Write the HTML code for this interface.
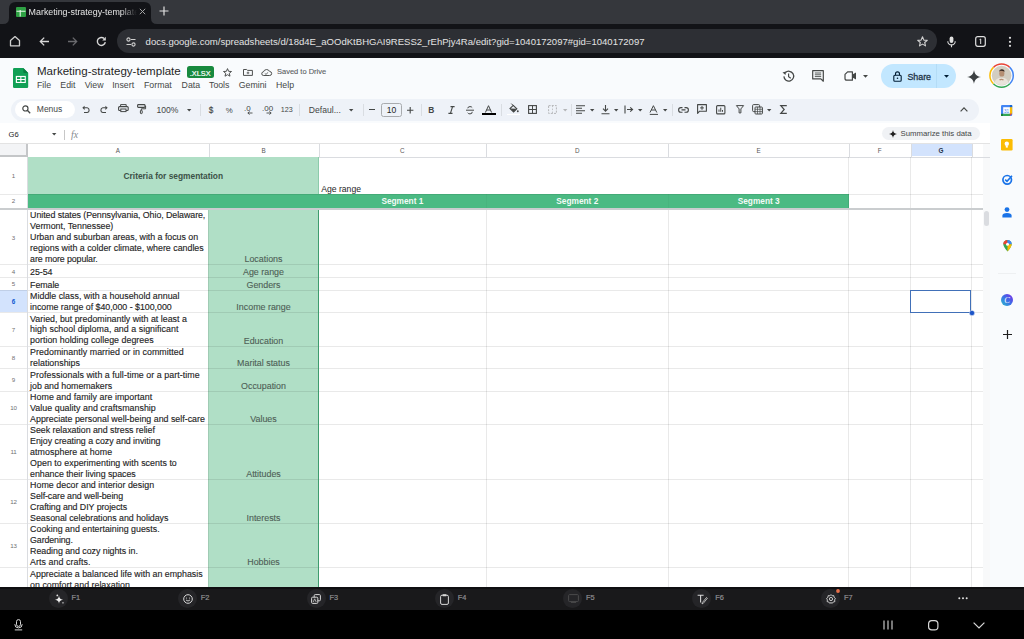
<!DOCTYPE html>
<html><head><meta charset="utf-8"><style>
*{margin:0;padding:0;box-sizing:border-box}
html,body{width:1024px;height:639px;overflow:hidden;background:#f9fbfd;font-family:"Liberation Sans",sans-serif;position:relative}
.a{position:absolute}
svg{position:absolute;overflow:visible}
.t{position:absolute;white-space:pre;line-height:1}
</style></head><body>
<div class="a" style="left:0px;top:0px;width:1024px;height:24px;background:#35373c;"></div>
<div class="a" style="left:0px;top:24px;width:1024px;height:34px;background:#121317;"></div>
<svg style="left:0px;top:0px;" width="170" height="26" viewBox="0 0 170 26"><path d="M3 24 Q9 24 9 18 L9 9 Q9 2 16 2 L144 2 Q151 2 151 9 L151 18 Q151 24 157 24 Z" fill="#121317"/></svg>
<svg style="left:15.5px;top:6.7px;" width="10" height="10" viewBox="0 0 10 10"><rect x="0" y="0" width="10" height="10" rx="1" fill="#2ea043"/><path d="M0.5 4.2H9.5M4.2 3V9.5" stroke="#e8f5e9" stroke-width="1.1"/></svg>
<div class="t" style="left:28.6px;top:7.77px;font-size:8.9px;color:#e6e6e6;width:108px;overflow:hidden;-webkit-mask-image:linear-gradient(90deg,#000 85%,transparent 100%)">Marketing-strategy-template</div>
<svg style="left:138.5px;top:8.3px;" width="7" height="7" viewBox="0 0 7 7"><path d="M0.8 0.8L6.2 6.2M6.2 0.8L0.8 6.2" stroke="#aaaaaa" stroke-width="0.95"/></svg>
<svg style="left:159px;top:6px;" width="10" height="10" viewBox="0 0 10 10"><path d="M5 0.5V9.5M0.5 5H9.5" stroke="#e0e0e0" stroke-width="1.2"/></svg>
<svg style="left:9px;top:35px;" width="12" height="12" viewBox="0 0 12 12"><path d="M1.5 5.5L6 1.6L10.5 5.5V10.8H1.5Z" fill="none" stroke="#d0d0d0" stroke-width="1.3" stroke-linejoin="round"/></svg>
<svg style="left:38.5px;top:36px;" width="11" height="11" viewBox="0 0 11 11"><path d="M10 5.5H1.5M5.2 1.6L1.3 5.5L5.2 9.4" fill="none" stroke="#d8d8d8" stroke-width="1.3"/></svg>
<svg style="left:66.5px;top:36px;" width="11" height="11" viewBox="0 0 11 11"><path d="M1 5.5H9.5M5.8 1.6L9.7 5.5L5.8 9.4" fill="none" stroke="#6a6a6e" stroke-width="1.3"/></svg>
<svg style="left:95.5px;top:35.5px;" width="11" height="11" viewBox="0 0 11 11"><path d="M9.3 6.2A4 4 0 1 1 8.2 2.6" fill="none" stroke="#d8d8d8" stroke-width="1.4"/><path d="M9.8 0.8V4.4H6.2Z" fill="#d8d8d8"/></svg>
<div class="a" style="left:117px;top:29px;width:820px;height:24px;background:#2d2f34;border-radius:12px;"></div>
<svg style="left:126px;top:36.5px;" width="10" height="10" viewBox="0 0 10 10"><circle cx="2.5" cy="2.5" r="1.6" fill="none" stroke="#cfcfcf" stroke-width="1.1"/><path d="M5 2.5H9.5M0.5 7.5H5" stroke="#cfcfcf" stroke-width="1.1"/><circle cx="7.5" cy="7.5" r="1.6" fill="none" stroke="#cfcfcf" stroke-width="1.1"/></svg>
<div class="t" style="left:145.60px;top:36.72px;font-size:9.55px;color:#e3e3e3;">docs.google.com/spreadsheets/d/18d4E_aOOdKtBHGAI9RESS2_rEhPjy4Ra/edit?gid=1040172097#gid=1040172097</div>
<svg style="left:916.5px;top:36.3px;" width="11" height="11" viewBox="0 0 11 11"><path d="M5.5 0.8L6.9 4.1L10.3 4.3L7.7 6.5L8.5 9.9L5.5 8.1L2.5 9.9L3.3 6.5L0.7 4.3L4.1 4.1Z" fill="none" stroke="#d0d0d0" stroke-width="1.1" stroke-linejoin="round"/></svg>
<svg style="left:947px;top:35.5px;" width="9" height="12" viewBox="0 0 9 12"><rect x="2.6" y="0.5" width="3.8" height="6.5" rx="1.9" fill="#e0e0e0"/><path d="M0.8 5.2A3.7 3.7 0 0 0 8.2 5.2M4.5 9V11.3" fill="none" stroke="#e0e0e0" stroke-width="1.1"/></svg>
<svg style="left:975px;top:36px;" width="11" height="11" viewBox="0 0 11 11"><rect x="0.7" y="0.7" width="9.6" height="9.6" rx="2" fill="none" stroke="#e0e0e0" stroke-width="1.2"/><path d="M4.6 3.6L5.7 3V8" fill="none" stroke="#e0e0e0" stroke-width="1"/></svg>
<svg style="left:1007.5px;top:36px;" width="4" height="12" viewBox="0 0 4 12"><circle cx="2" cy="1.8" r="1.1" fill="#e0e0e0"/><circle cx="2" cy="5.8" r="1.1" fill="#e0e0e0"/><circle cx="2" cy="9.8" r="1.1" fill="#e0e0e0"/></svg>
<div class="a" style="left:0px;top:58px;width:1024px;height:529px;background:#f9fbfd;"></div>
<svg style="left:13.2px;top:67.9px;" width="16" height="20" viewBox="0 0 16 20"><path d="M1.2 0H10.3L15.2 5V18.8Q15.2 20 14 20H1.2Q0 20 0 18.8V1.2Q0 0 1.2 0Z" fill="#11a055"/><path d="M10.3 0V4Q10.3 5 11.3 5H15.2Z" fill="#0b7d40"/><rect x="2.8" y="7.9" width="10" height="7.1" fill="#fff"/><rect x="4" y="9.1" width="3.3" height="1.9" fill="#11a055"/><rect x="8.4" y="9.1" width="3.3" height="1.9" fill="#11a055"/><rect x="4" y="12" width="3.3" height="1.9" fill="#11a055"/><rect x="8.4" y="12" width="3.3" height="1.9" fill="#11a055"/></svg>
<div class="t" style="left:37.00px;top:66.32px;font-size:11.55px;color:#1f1f1f;">Marketing-strategy-template</div>
<div class="a" style="left:187px;top:66.2px;width:26.5px;height:11.8px;background:#188a3e;border-radius:2.5px;"></div>
<div class="t" style="left:200.20px;transform:translateX(-50%);top:69.62px;font-size:7.3px;color:#ffffff;-webkit-text-stroke:0.2px #fff;">.XLSX</div>
<svg style="left:223.2px;top:67.8px;" width="9" height="9" viewBox="0 0 9 9"><path d="M4.5 0.6L5.6 3.3L8.5 3.5L6.3 5.3L7 8.2L4.5 6.7L2 8.2L2.7 5.3L0.5 3.5L3.4 3.3Z" fill="none" stroke="#444746" stroke-width="0.95" stroke-linejoin="round"/></svg>
<svg style="left:242.5px;top:69.2px;" width="10" height="7" viewBox="0 0 10 7"><path d="M0.5 0.5H3.6L4.6 1.4H9.4V6.4H0.5Z" fill="none" stroke="#444746" stroke-width="0.95"/><path d="M5 2.6V5.2M3.7 3.9H6.3" stroke="#444746" stroke-width="0.8"/></svg>
<svg style="left:261.2px;top:69px;" width="11" height="7" viewBox="0 0 11 7"><path d="M2.7 6.5H8.6A2 2 0 0 0 8.7 2.5A3.4 3.4 0 0 0 2.4 2.9A1.8 1.8 0 0 0 2.7 6.5Z" fill="none" stroke="#444746" stroke-width="0.95"/><path d="M3.8 4.5L5 5.4L7.2 3.3" fill="none" stroke="#444746" stroke-width="0.8"/></svg>
<div class="t" style="left:277.00px;top:68.35px;font-size:7.5px;color:#5a5e62;-webkit-text-stroke:0.1px #5a5e62;">Saved to Drive</div>
<div class="t" style="left:37.00px;top:81.29px;font-size:8.75px;color:#444746;">File</div>
<div class="t" style="left:60.30px;top:81.29px;font-size:8.75px;color:#444746;">Edit</div>
<div class="t" style="left:84.70px;top:81.29px;font-size:8.75px;color:#444746;">View</div>
<div class="t" style="left:112.20px;top:81.29px;font-size:8.75px;color:#444746;">Insert</div>
<div class="t" style="left:144.00px;top:81.29px;font-size:8.75px;color:#444746;">Format</div>
<div class="t" style="left:181.60px;top:81.29px;font-size:8.75px;color:#444746;">Data</div>
<div class="t" style="left:209.00px;top:81.29px;font-size:8.75px;color:#444746;">Tools</div>
<div class="t" style="left:238.75px;top:81.29px;font-size:8.75px;color:#444746;">Gemini</div>
<div class="t" style="left:276.00px;top:81.29px;font-size:8.75px;color:#444746;">Help</div>
<svg style="left:782px;top:70.3px;" width="12.5" height="12.5" viewBox="0 0 12.5 12.5"><path d="M1.9 6.4A4.9 4.9 0 1 0 3.3 2.7" fill="none" stroke="#444746" stroke-width="1.25"/><path d="M0.5 2.6L3.9 1.4L3.5 5Z" fill="#444746"/><path d="M6.6 3.6V6.7L8.8 8.2" fill="none" stroke="#444746" stroke-width="1.15"/></svg>
<svg style="left:811.8px;top:70.4px;" width="12.5" height="12" viewBox="0 0 12.5 12"><path d="M0.7 0.7H11.3V11.2L8.9 8.9H0.7Z" fill="none" stroke="#444746" stroke-width="1.2" stroke-linejoin="round"/><path d="M2.8 3H9.2M2.8 4.8H9.2M2.8 6.6H9.2" stroke="#444746" stroke-width="0.9"/></svg>
<svg style="left:843.5px;top:71px;" width="14" height="10" viewBox="0 0 14 10"><path d="M3.6 0.8H8.4V9.2H2.7Q1 9.2 1 7.5V3.4Z" fill="none" stroke="#444746" stroke-width="1.2" stroke-linejoin="round"/><path d="M8.4 3.6L12 1.5V8.5L8.4 6.4Z" fill="#444746"/></svg>
<svg style="left:862.7px;top:74.8px;" width="5" height="3" viewBox="0 0 5 3"><path d="M0 0H5L2.5 2.8Z" fill="#444746"/></svg>
<div class="a" style="left:881px;top:64.4px;width:75px;height:24px;background:#c2e7ff;border-radius:12px;"></div>
<div class="a" style="left:936.2px;top:64.4px;width:0.8px;height:24px;background:#b4dcf6;"></div>
<svg style="left:892.5px;top:70.5px;" width="9" height="11" viewBox="0 0 9 11"><rect x="0.8" y="4.2" width="7.4" height="6" rx="1" fill="none" stroke="#001d35" stroke-width="1.1"/><path d="M2.5 4.2V2.9A2 2 0 0 1 6.5 2.9V4.2" fill="none" stroke="#001d35" stroke-width="1.1"/><circle cx="4.5" cy="7.2" r="0.8" fill="#001d35"/></svg>
<div class="t" style="left:907.40px;top:72.91px;font-size:8.85px;color:#1d3347;-webkit-text-stroke:0.3px #1d3347;">Share</div>
<svg style="left:943.6px;top:74.8px;" width="5" height="3" viewBox="0 0 5 3"><path d="M0 0H5L2.5 2.8Z" fill="#001d35"/></svg>
<svg style="left:966.5px;top:70px;" width="14" height="14" viewBox="0 0 14 14"><path d="M7 0C7.4 3.8 9.6 6.4 14 7C9.6 7.6 7.4 10.2 7 14C6.6 10.2 4.4 7.6 0 7C4.4 6.4 6.6 3.8 7 0Z" fill="#3c4043"/></svg>
<svg style="left:990px;top:64.4px;" width="23.2" height="23.2" viewBox="0 0 23.2 23.2"><path d="M3.4 3.4A11.4 11.4 0 0 1 19.8 3.4" fill="none" stroke="#ea4335" stroke-width="1.5"/><path d="M19.8 3.4A11.4 11.4 0 0 1 19.8 19.8" fill="none" stroke="#4285f4" stroke-width="1.5"/><path d="M19.8 19.8A11.4 11.4 0 0 1 3.4 19.8" fill="none" stroke="#34a853" stroke-width="1.5"/><path d="M3.4 19.8A11.4 11.4 0 0 1 3.4 3.4" fill="none" stroke="#fbbc04" stroke-width="1.5"/><circle cx="11.6" cy="11.6" r="9.8" fill="#d2cdc0"/><path d="M4.5 18.5Q6 13.5 11.6 13.8Q17 13.5 18.5 18.5Q11.6 23.5 4.5 18.5Z" fill="#e9e4da"/><ellipse cx="11.8" cy="9.4" rx="2.6" ry="3.2" fill="#b58f73"/><path d="M9 7.8Q9.2 5 11.8 5.2Q14.6 5.1 14.6 7.8Q13 6.6 11.8 7Q10.4 6.5 9 7.8Z" fill="#3a2c24"/><path d="M9.5 16Q11 14.8 13.5 15.8" stroke="#b58f73" stroke-width="1.4" fill="none"/></svg>
<div class="a" style="left:10.7px;top:98.5px;width:968.5px;height:22.2px;background:#eef2f8;border-radius:11px;"></div>
<div class="a" style="left:15.1px;top:101.1px;width:60.1px;height:17px;background:#ffffff;border-radius:8.5px;"></div>
<svg style="left:21.5px;top:105.3px;" width="9" height="9" viewBox="0 0 9 9"><circle cx="3.4" cy="3.4" r="2.6" fill="none" stroke="#444746" stroke-width="1.15"/><path d="M5.3 5.3L8.2 8.2" stroke="#444746" stroke-width="1.3"/></svg>
<div class="t" style="left:36.80px;top:105.10px;font-size:8.5px;color:#444746;">Menus</div>
<svg style="left:82.2px;top:105.2px;" width="7.5" height="7.5" viewBox="0 0 7.5 7.5"><path d="M2.2 2.8H5.2A2.4 2.4 0 0 1 5.2 7.5H2" fill="none" stroke="#444746" stroke-width="1.1"/><path d="M0.3 2.8L2.6 0.7V4.9Z" fill="#444746"/></svg>
<svg style="left:100.3px;top:105.2px;" width="7.5" height="7.5" viewBox="0 0 7.5 7.5"><path d="M5.8 2.8H2.8A2.4 2.4 0 0 0 2.8 7.5H6" fill="none" stroke="#444746" stroke-width="1.1"/><path d="M7.7 2.8L5.4 0.7V4.9Z" fill="#444746"/></svg>
<svg style="left:118px;top:104.4px;" width="11" height="8" viewBox="0 0 11 8"><path d="M2.6 2.6V0.6H8.2V2.6" fill="none" stroke="#444746" stroke-width="1"/><rect x="0.6" y="2.6" width="9.6" height="3.9" rx="1" fill="none" stroke="#444746" stroke-width="1.1"/><rect x="2.8" y="5" width="5.2" height="2.6" fill="#eef2f8" stroke="#444746" stroke-width="1"/></svg>
<svg style="left:137px;top:104.1px;" width="9" height="10" viewBox="0 0 9 10"><rect x="0.6" y="0.6" width="7.4" height="2.8" rx="0.8" fill="none" stroke="#444746" stroke-width="1.1"/><path d="M8 2H8.6V4.8H4.3V6.3" fill="none" stroke="#444746" stroke-width="1"/><rect x="3.4" y="6.3" width="1.8" height="3.3" rx="0.6" fill="none" stroke="#444746" stroke-width="1"/></svg>
<div class="t" style="left:156.50px;top:105.52px;font-size:8.6px;color:#444746;">100%</div>
<svg style="left:187.3px;top:108.8px;" width="4.4" height="2.6" viewBox="0 0 4.4 2.6"><path d="M0 0H4.4L2.2 2.4Z" fill="#444746"/></svg>
<div class="a" style="left:199.6px;top:103.5px;width:0.8px;height:12px;background:#d9dde2;"></div>
<div class="a" style="left:299.4px;top:103.5px;width:0.8px;height:12px;background:#d9dde2;"></div>
<div class="a" style="left:363.4px;top:103.5px;width:0.8px;height:12px;background:#d9dde2;"></div>
<div class="a" style="left:420.8px;top:103.5px;width:0.8px;height:12px;background:#d9dde2;"></div>
<div class="a" style="left:500.7px;top:103.5px;width:0.8px;height:12px;background:#d9dde2;"></div>
<div class="a" style="left:570.5px;top:103.5px;width:0.8px;height:12px;background:#d9dde2;"></div>
<div class="a" style="left:672px;top:103.5px;width:0.8px;height:12px;background:#d9dde2;"></div>
<div class="t" style="left:211.00px;transform:translateX(-50%);top:106.86px;font-size:8.2px;color:#444746;-webkit-text-stroke:0.15px #444746;">$</div>
<div class="t" style="left:229.30px;transform:translateX(-50%);top:107.20px;font-size:7.8px;color:#444746;">%</div>
<div class="t" style="left:244.00px;top:104.53px;font-size:8px;color:#444746;">.0</div>
<svg style="left:246.5px;top:111.3px;" width="6" height="4" viewBox="0 0 6 4"><path d="M5.5 2H1.2M2.6 0.5L0.8 2L2.6 3.5" fill="none" stroke="#444746" stroke-width="0.9"/></svg>
<div class="t" style="left:262.00px;top:104.53px;font-size:8px;color:#444746;">.00</div>
<svg style="left:265.5px;top:111.3px;" width="6" height="4" viewBox="0 0 6 4"><path d="M0.5 2H4.8M3.4 0.5L5.2 2L3.4 3.5" fill="none" stroke="#444746" stroke-width="0.9"/></svg>
<div class="t" style="left:286.70px;transform:translateX(-50%);top:105.71px;font-size:7.2px;color:#444746;">123</div>
<div class="t" style="left:308.80px;top:105.52px;font-size:8.6px;color:#444746;">Defaul...</div>
<svg style="left:348.5px;top:108.8px;" width="4.4" height="2.6" viewBox="0 0 4.4 2.6"><path d="M0 0H4.4L2.2 2.4Z" fill="#444746"/></svg>
<div class="a" style="left:368.5px;top:109.4px;width:6px;height:1.1px;background:#444746;"></div>
<div class="a" style="left:381.4px;top:102.7px;width:20.3px;height:13.9px;background:#eef2f8;border:0.9px solid #a8abae;border-radius:2.5px;"></div>
<div class="t" style="left:391.50px;transform:translateX(-50%);top:105.62px;font-size:8.6px;color:#1f1f1f;">10</div>
<svg style="left:406.8px;top:106.5px;" width="6.4" height="6.4" viewBox="0 0 6.4 6.4"><path d="M3.2 0V6.4M0 3.2H6.4" stroke="#444746" stroke-width="1.1"/></svg>
<div class="t" style="left:431.40px;transform:translateX(-50%);top:105.99px;font-size:8.4px;color:#444746;font-weight:700;">B</div>
<svg style="left:447.5px;top:105.8px;" width="7" height="8" viewBox="0 0 7 8"><path d="M2.5 0.6H6.6M0.4 7.4H4.5M4.6 0.6L2.4 7.4" fill="none" stroke="#444746" stroke-width="1.1"/></svg>
<svg style="left:465.5px;top:105.5px;" width="8" height="8.5" viewBox="0 0 8 8.5"><path d="M6.2 1.6Q5.6 0.6 4 0.6Q1.8 0.6 1.8 2.3M0 4.2H8M6.2 5.8Q6.4 7.9 4 7.9Q2.4 7.9 1.7 6.8" fill="none" stroke="#444746" stroke-width="1"/></svg>
<svg style="left:484.4px;top:104.5px;" width="9" height="8" viewBox="0 0 9 8"><path d="M1.4 7.5L4.5 0.7L7.6 7.5M2.5 5H6.5" fill="none" stroke="#444746" stroke-width="1"/></svg>
<div class="a" style="left:481.7px;top:113.2px;width:14.3px;height:2px;background:#000000;"></div>
<svg style="left:508.8px;top:102.8px;" width="10" height="10" viewBox="0 0 10 10"><path d="M2.3 0.6L4.6 2.9" stroke="#444746" stroke-width="1"/><path d="M4.2 2.4L7.8 5.8L4.6 9L1 5.6Z" fill="none" stroke="#444746" stroke-width="1.1"/><path d="M1 5.6L7.8 5.8L4.6 9Z" fill="#444746"/><circle cx="8.8" cy="8.2" r="0.95" fill="#444746"/></svg>
<div class="a" style="left:507px;top:113.5px;width:13px;height:1.8px;background:#ffffff;"></div>
<svg style="left:527.8px;top:105.1px;" width="9" height="9" viewBox="0 0 9 9"><rect x="0.6" y="0.6" width="7.8" height="7.8" fill="none" stroke="#444746" stroke-width="1.1"/><path d="M4.5 0.6V8.4M0.6 4.5H8.4" stroke="#444746" stroke-width="1"/></svg>
<svg style="left:548.3px;top:105.1px;" width="9" height="9" viewBox="0 0 9 9"><rect x="0.6" y="0.6" width="7.8" height="7.8" fill="none" stroke="#b4b6b8" stroke-width="1" stroke-dasharray="2 1.2"/><path d="M4.5 0.6V8.4" stroke="#b4b6b8" stroke-width="0.8" stroke-dasharray="1.5 1.5"/></svg>
<svg style="left:562.8px;top:108.8px;" width="4.4" height="2.6" viewBox="0 0 4.4 2.6"><path d="M0 0H4.4L2.2 2.4Z" fill="#b4b6b8"/></svg>
<svg style="left:576px;top:105px;" width="9" height="9" viewBox="0 0 9 9"><path d="M0 0.8H9M0 3.3H6M0 5.8H9M0 8.3H6" stroke="#444746" stroke-width="1.05"/></svg>
<svg style="left:589.8px;top:108.8px;" width="4.4" height="2.6" viewBox="0 0 4.4 2.6"><path d="M0 0H4.4L2.2 2.4Z" fill="#444746"/></svg>
<svg style="left:601px;top:104.5px;" width="9" height="10" viewBox="0 0 9 10"><path d="M4.5 0V5.8M2 3.6L4.5 6.2L7 3.6M0.5 8.8H8.5" fill="none" stroke="#444746" stroke-width="1.1"/></svg>
<svg style="left:613.5px;top:108.8px;" width="4.4" height="2.6" viewBox="0 0 4.4 2.6"><path d="M0 0H4.4L2.2 2.4Z" fill="#444746"/></svg>
<svg style="left:623.5px;top:104.8px;" width="10" height="9" viewBox="0 0 10 9"><path d="M1 0.5V8.5M3 4.5H8.5M6.2 2.3L8.6 4.5L6.2 6.7" fill="none" stroke="#444746" stroke-width="1.1"/></svg>
<svg style="left:638.4px;top:108.8px;" width="4.4" height="2.6" viewBox="0 0 4.4 2.6"><path d="M0 0H4.4L2.2 2.4Z" fill="#444746"/></svg>
<svg style="left:649px;top:104.5px;" width="10" height="10" viewBox="0 0 10 10"><path d="M1 7.5L4.4 0.7L7.8 7.5M2.2 5H6.6M0.8 9.4H9" fill="none" stroke="#444746" stroke-width="1"/></svg>
<svg style="left:662.5px;top:108.8px;" width="4.4" height="2.6" viewBox="0 0 4.4 2.6"><path d="M0 0H4.4L2.2 2.4Z" fill="#444746"/></svg>
<svg style="left:677.8px;top:106.6px;" width="11" height="6" viewBox="0 0 11 6"><path d="M4.5 0.6H2.9A2.3 2.3 0 0 0 2.9 5.2H4.5M6.5 0.6H8.1A2.3 2.3 0 0 1 8.1 5.2H6.5M3.5 2.9H7.5" fill="none" stroke="#444746" stroke-width="1.1"/></svg>
<svg style="left:697px;top:104px;" width="10" height="10" viewBox="0 0 10 10"><path d="M0.6 0.6H9.4V7.2H2.6L0.6 9.3Z" fill="none" stroke="#444746" stroke-width="1.1" stroke-linejoin="round"/><path d="M5 2V5.8M3.1 3.9H6.9" stroke="#444746" stroke-width="1"/></svg>
<svg style="left:716.3px;top:104.7px;" width="9.5" height="9.5" viewBox="0 0 9.5 9.5"><rect x="0.6" y="0.6" width="8.3" height="8.3" rx="1" fill="none" stroke="#444746" stroke-width="1.1"/><path d="M3 6.8V4.5M4.75 6.8V2.7M6.5 6.8V5" stroke="#444746" stroke-width="1"/></svg>
<svg style="left:735.6px;top:105.3px;" width="8" height="8.5" viewBox="0 0 8 8.5"><path d="M0.4 0.6H7.6L4.9 3.9V7.9H3.1V3.9Z" fill="none" stroke="#444746" stroke-width="1"/></svg>
<svg style="left:751.8px;top:104.3px;" width="11" height="10.5" viewBox="0 0 11 10.5"><rect x="0.6" y="0.6" width="7" height="7" rx="1" fill="none" stroke="#444746" stroke-width="1"/><rect x="3" y="3" width="7.4" height="7" rx="0.8" fill="#eef2f8" stroke="#444746" stroke-width="1"/><path d="M3 5.3H10.4M3 7.6H10.4M5.5 3V10M8 3V10" stroke="#444746" stroke-width="0.7"/></svg>
<svg style="left:766.5999999999999px;top:108.8px;" width="4.4" height="2.6" viewBox="0 0 4.4 2.6"><path d="M0 0H4.4L2.2 2.4Z" fill="#444746"/></svg>
<svg style="left:779.5px;top:105px;" width="7.5" height="9" viewBox="0 0 7.5 9"><path d="M6.8 0.6H0.8L4.2 4.5L0.8 8.4H6.8" fill="none" stroke="#444746" stroke-width="1.2" stroke-linejoin="miter"/></svg>
<svg style="left:959.8px;top:107px;" width="8" height="5" viewBox="0 0 8 5"><path d="M0.6 4.3L4 0.9L7.4 4.3" fill="none" stroke="#444746" stroke-width="1.2"/></svg>
<div class="a" style="left:0px;top:122.5px;width:990px;height:21px;background:#ffffff;"></div>
<div class="t" style="left:8.60px;top:131.37px;font-size:7.6px;color:#1f1f1f;">G6</div>
<svg style="left:51.8px;top:133.3px;" width="4.4" height="2.6" viewBox="0 0 4.4 2.6"><path d="M0 0H4.4L2.2 2.4Z" fill="#444746"/></svg>
<div class="a" style="left:64px;top:130px;width:0.8px;height:9.6px;background:#c7c7c7;"></div>
<div class="t" style="left:71px;top:130.18px;font-size:9.8px;color:#858a8f;font-family:'Liberation Serif',serif;font-style:italic">fx</div>
<div class="a" style="left:882.4px;top:126.8px;width:97.2px;height:13.4px;background:#f0f2f5;border-radius:6.7px;"></div>
<svg style="left:888.7px;top:129.5px;" width="8" height="8" viewBox="0 0 8 8"><path d="M4 0C4.2 2.2 5.5 3.7 8 4C5.5 4.3 4.2 5.8 4 8C3.8 5.8 2.5 4.3 0 4C2.5 3.7 3.8 2.2 4 0Z" fill="#1f1f1f"/></svg>
<div class="t" style="left:900.50px;top:130.30px;font-size:7.8px;color:#444746;">Summarize this data</div>
<div class="a" style="left:0px;top:143.3px;width:983px;height:443.7px;background:#ffffff;"></div>
<div class="a" style="left:0px;top:143px;width:990px;height:0.9px;background:#e3e3e3;"></div>
<div class="a" style="left:0px;top:143.8px;width:26px;height:11px;background:#f3f4f6;"></div>
<div class="a" style="left:27.5px;top:156.6px;width:962.5px;height:0.9px;background:#dadce0;"></div>
<div class="a" style="left:910.5px;top:143.8px;width:61px;height:12.7px;background:#d3e3fd;"></div>
<div class="t" style="left:117.90px;transform:translateX(-50%);top:147.77px;font-size:6.3px;color:#575757;">A</div>
<div class="t" style="left:263.55px;transform:translateX(-50%);top:147.77px;font-size:6.3px;color:#575757;">B</div>
<div class="t" style="left:402.40px;transform:translateX(-50%);top:147.77px;font-size:6.3px;color:#575757;">C</div>
<div class="t" style="left:577.30px;transform:translateX(-50%);top:147.77px;font-size:6.3px;color:#575757;">D</div>
<div class="t" style="left:758.70px;transform:translateX(-50%);top:147.77px;font-size:6.3px;color:#575757;">E</div>
<div class="t" style="left:879.75px;transform:translateX(-50%);top:147.77px;font-size:6.3px;color:#575757;">F</div>
<div class="t" style="left:941.00px;transform:translateX(-50%);top:147.68px;font-size:6.4px;color:#22324a;font-weight:700;">G</div>
<div class="a" style="left:208.5px;top:143.8px;width:0.8px;height:12.8px;background:#dadce0;"></div>
<div class="a" style="left:318.6px;top:143.8px;width:0.8px;height:12.8px;background:#dadce0;"></div>
<div class="a" style="left:486.2px;top:143.8px;width:0.8px;height:12.8px;background:#dadce0;"></div>
<div class="a" style="left:668.4px;top:143.8px;width:0.8px;height:12.8px;background:#dadce0;"></div>
<div class="a" style="left:849px;top:143.8px;width:0.8px;height:12.8px;background:#dadce0;"></div>
<div class="a" style="left:910.5px;top:143.8px;width:0.8px;height:12.8px;background:#dadce0;"></div>
<div class="a" style="left:971.5px;top:143.8px;width:0.8px;height:12.8px;background:#dadce0;"></div>
<div class="a" style="left:27.5px;top:157px;width:291.1px;height:37px;background:#b0dfc6;"></div>
<div class="a" style="left:27.5px;top:194px;width:821.5px;height:14px;background:#4bba83;"></div>
<div class="a" style="left:208.1px;top:209.6px;width:110.50000000000003px;height:377.4px;background:#b0dfc6;"></div>
<div class="a" style="left:910.5px;top:289.8px;width:0px;height:0px;background:transparent;"></div>
<div class="a" style="left:0px;top:290.4px;width:27.3px;height:21.80000000000001px;background:#d3e3fd;"></div>
<div class="a" style="left:0px;top:194px;width:983px;height:1px;background:rgba(0,0,0,0.085);"></div>
<div class="a" style="left:0px;top:264px;width:983px;height:1px;background:rgba(0,0,0,0.085);"></div>
<div class="a" style="left:0px;top:277px;width:983px;height:1px;background:rgba(0,0,0,0.085);"></div>
<div class="a" style="left:0px;top:290px;width:983px;height:1px;background:rgba(0,0,0,0.085);"></div>
<div class="a" style="left:0px;top:312px;width:983px;height:1px;background:rgba(0,0,0,0.085);"></div>
<div class="a" style="left:0px;top:346px;width:983px;height:1px;background:rgba(0,0,0,0.085);"></div>
<div class="a" style="left:0px;top:368px;width:983px;height:1px;background:rgba(0,0,0,0.085);"></div>
<div class="a" style="left:0px;top:391px;width:983px;height:1px;background:rgba(0,0,0,0.085);"></div>
<div class="a" style="left:0px;top:424px;width:983px;height:1px;background:rgba(0,0,0,0.085);"></div>
<div class="a" style="left:0px;top:479px;width:983px;height:1px;background:rgba(0,0,0,0.085);"></div>
<div class="a" style="left:0px;top:523px;width:983px;height:1px;background:rgba(0,0,0,0.085);"></div>
<div class="a" style="left:0px;top:567px;width:983px;height:1px;background:rgba(0,0,0,0.085);"></div>
<div class="a" style="left:27.1px;top:157px;width:0.9px;height:430px;background:#dadce0;"></div>
<div class="a" style="left:208px;top:210px;width:1px;height:377px;background:rgba(0,0,0,0.085);"></div>
<div class="a" style="left:486px;top:210px;width:1px;height:377px;background:rgba(0,0,0,0.085);"></div>
<div class="a" style="left:486px;top:194px;width:1px;height:14px;background:rgba(0,0,0,0.03);"></div>
<div class="a" style="left:668px;top:210px;width:1px;height:377px;background:rgba(0,0,0,0.085);"></div>
<div class="a" style="left:668px;top:194px;width:1px;height:14px;background:rgba(0,0,0,0.03);"></div>
<div class="a" style="left:848px;top:157px;width:1px;height:430px;background:rgba(0,0,0,0.085);"></div>
<div class="a" style="left:910px;top:157px;width:1px;height:430px;background:rgba(0,0,0,0.085);"></div>
<div class="a" style="left:971px;top:157px;width:1px;height:430px;background:rgba(0,0,0,0.085);"></div>
<div class="a" style="left:318.1px;top:157.1px;width:1.1px;height:37.099999999999994px;background:#8ccbab;"></div>
<div class="a" style="left:318.1px;top:209.6px;width:1.1px;height:377.4px;background:#3e9c6e;"></div>
<div class="a" style="left:0px;top:208px;width:983px;height:2px;background:#cacdcf;"></div>
<div class="a" style="left:26px;top:143.8px;width:2px;height:13.4px;background:#c4c6c8;"></div>
<div class="a" style="left:0px;top:154.8px;width:27.5px;height:2.4px;background:#c4c6c8;"></div>
<div class="t" style="left:13.60px;transform:translateX(-50%);top:173.20px;font-size:6.2px;color:#6f6f6f;">1</div>
<div class="t" style="left:13.60px;transform:translateX(-50%);top:198.40px;font-size:6.2px;color:#6f6f6f;">2</div>
<div class="t" style="left:13.60px;transform:translateX(-50%);top:234.65px;font-size:6.2px;color:#6f6f6f;">3</div>
<div class="t" style="left:13.60px;transform:translateX(-50%);top:268.50px;font-size:6.2px;color:#6f6f6f;">4</div>
<div class="t" style="left:13.60px;transform:translateX(-50%);top:281.40px;font-size:6.2px;color:#6f6f6f;">5</div>
<div class="t" style="left:13.60px;transform:translateX(-50%);top:298.77px;font-size:6.3px;color:#0b57d0;font-weight:700;">6</div>
<div class="t" style="left:13.60px;transform:translateX(-50%);top:326.65px;font-size:6.2px;color:#6f6f6f;">7</div>
<div class="t" style="left:13.60px;transform:translateX(-50%);top:354.75px;font-size:6.2px;color:#6f6f6f;">8</div>
<div class="t" style="left:13.60px;transform:translateX(-50%);top:377.35px;font-size:6.2px;color:#6f6f6f;">9</div>
<div class="t" style="left:13.60px;transform:translateX(-50%);top:405.35px;font-size:6.2px;color:#6f6f6f;">10</div>
<div class="t" style="left:13.60px;transform:translateX(-50%);top:449.30px;font-size:6.2px;color:#6f6f6f;">11</div>
<div class="t" style="left:13.60px;transform:translateX(-50%);top:498.80px;font-size:6.2px;color:#6f6f6f;">12</div>
<div class="t" style="left:13.60px;transform:translateX(-50%);top:542.90px;font-size:6.2px;color:#6f6f6f;">13</div>
<div class="t" style="left:173.30px;transform:translateX(-50%);top:172.19px;font-size:8.4px;color:#3c5247;font-weight:700;">Criteria for segmentation</div>
<div class="t" style="left:321.20px;top:184.68px;font-size:8.65px;color:#1f1f1f;">Age range</div>
<div class="t" style="left:402.40px;transform:translateX(-50%);top:197.07px;font-size:8.3px;color:#f4fbf7;font-weight:700;">Segment 1</div>
<div class="t" style="left:577.30px;transform:translateX(-50%);top:197.07px;font-size:8.3px;color:#f4fbf7;font-weight:700;">Segment 2</div>
<div class="t" style="left:758.70px;transform:translateX(-50%);top:197.07px;font-size:8.3px;color:#f4fbf7;font-weight:700;">Segment 3</div>
<div class="t" style="left:30.10px;top:211.21px;font-size:8.85px;color:#1f1f1f;letter-spacing:-0.063px;-webkit-text-stroke:0.14px #1f1f1f;">United states (Pennsylvania, Ohio, Delaware,</div>
<div class="t" style="left:30.10px;top:222.16px;font-size:8.85px;color:#1f1f1f;letter-spacing:-0.011px;-webkit-text-stroke:0.14px #1f1f1f;">Vermont, Tennessee)</div>
<div class="t" style="left:30.10px;top:233.11px;font-size:8.85px;color:#1f1f1f;letter-spacing:-0.027px;-webkit-text-stroke:0.14px #1f1f1f;">Urban and suburban areas, with a focus on</div>
<div class="t" style="left:30.10px;top:244.06px;font-size:8.85px;color:#1f1f1f;letter-spacing:0.002px;-webkit-text-stroke:0.14px #1f1f1f;">regions with a colder climate, where candles</div>
<div class="t" style="left:30.10px;top:255.01px;font-size:8.85px;color:#1f1f1f;letter-spacing:-0.106px;-webkit-text-stroke:0.14px #1f1f1f;">are more popular.</div>
<div class="t" style="left:263.50px;transform:translateX(-50%);top:255.47px;font-size:8.9px;color:#4f5f57;-webkit-text-stroke:0.12px #4f5f57;">Locations</div>
<div class="t" style="left:30.10px;top:267.71px;font-size:8.85px;color:#1f1f1f;letter-spacing:-0.05px;-webkit-text-stroke:0.14px #1f1f1f;">25-54</div>
<div class="t" style="left:263.50px;transform:translateX(-50%);top:268.17px;font-size:8.9px;color:#4f5f57;-webkit-text-stroke:0.12px #4f5f57;">Age range</div>
<div class="t" style="left:30.10px;top:280.81px;font-size:8.85px;color:#1f1f1f;letter-spacing:-0.06px;-webkit-text-stroke:0.14px #1f1f1f;">Female</div>
<div class="t" style="left:263.50px;transform:translateX(-50%);top:281.27px;font-size:8.9px;color:#4f5f57;-webkit-text-stroke:0.12px #4f5f57;">Genders</div>
<div class="t" style="left:30.10px;top:291.66px;font-size:8.85px;color:#1f1f1f;letter-spacing:0.011px;-webkit-text-stroke:0.14px #1f1f1f;">Middle class, with a household annual</div>
<div class="t" style="left:30.10px;top:302.61px;font-size:8.85px;color:#1f1f1f;letter-spacing:-0.03px;-webkit-text-stroke:0.14px #1f1f1f;">income range of $40,000 - $100,000</div>
<div class="t" style="left:263.50px;transform:translateX(-50%);top:303.07px;font-size:8.9px;color:#4f5f57;-webkit-text-stroke:0.12px #4f5f57;">Income range</div>
<div class="t" style="left:30.10px;top:314.51px;font-size:8.85px;color:#1f1f1f;letter-spacing:0.002px;-webkit-text-stroke:0.14px #1f1f1f;">Varied, but predominantly with at least a</div>
<div class="t" style="left:30.10px;top:325.46px;font-size:8.85px;color:#1f1f1f;letter-spacing:0.035px;-webkit-text-stroke:0.14px #1f1f1f;">high school diploma, and a significant</div>
<div class="t" style="left:30.10px;top:336.41px;font-size:8.85px;color:#1f1f1f;letter-spacing:0.02px;-webkit-text-stroke:0.14px #1f1f1f;">portion holding college degrees</div>
<div class="t" style="left:263.50px;transform:translateX(-50%);top:336.87px;font-size:8.9px;color:#4f5f57;-webkit-text-stroke:0.12px #4f5f57;">Education</div>
<div class="t" style="left:30.10px;top:347.86px;font-size:8.85px;color:#1f1f1f;letter-spacing:0.047px;-webkit-text-stroke:0.14px #1f1f1f;">Predominantly married or in committed</div>
<div class="t" style="left:30.10px;top:358.81px;font-size:8.85px;color:#1f1f1f;letter-spacing:0.017px;-webkit-text-stroke:0.14px #1f1f1f;">relationships</div>
<div class="t" style="left:263.50px;transform:translateX(-50%);top:359.27px;font-size:8.9px;color:#4f5f57;-webkit-text-stroke:0.12px #4f5f57;">Marital status</div>
<div class="t" style="left:30.10px;top:370.66px;font-size:8.85px;color:#1f1f1f;letter-spacing:0.055px;-webkit-text-stroke:0.14px #1f1f1f;">Professionals with a full-time or a part-time</div>
<div class="t" style="left:30.10px;top:381.61px;font-size:8.85px;color:#1f1f1f;letter-spacing:-0.035px;-webkit-text-stroke:0.14px #1f1f1f;">job and homemakers</div>
<div class="t" style="left:263.50px;transform:translateX(-50%);top:382.07px;font-size:8.9px;color:#4f5f57;-webkit-text-stroke:0.12px #4f5f57;">Occupation</div>
<div class="t" style="left:30.10px;top:392.91px;font-size:8.85px;color:#1f1f1f;letter-spacing:0.039px;-webkit-text-stroke:0.14px #1f1f1f;">Home and family are important</div>
<div class="t" style="left:30.10px;top:403.86px;font-size:8.85px;color:#1f1f1f;letter-spacing:0.033px;-webkit-text-stroke:0.14px #1f1f1f;">Value quality and craftsmanship</div>
<div class="t" style="left:30.10px;top:414.81px;font-size:8.85px;color:#1f1f1f;letter-spacing:0.007px;-webkit-text-stroke:0.14px #1f1f1f;">Appreciate personal well-being and self-care</div>
<div class="t" style="left:263.50px;transform:translateX(-50%);top:415.27px;font-size:8.9px;color:#4f5f57;-webkit-text-stroke:0.12px #4f5f57;">Values</div>
<div class="t" style="left:30.10px;top:425.71px;font-size:8.85px;color:#1f1f1f;letter-spacing:-0.034px;-webkit-text-stroke:0.14px #1f1f1f;">Seek relaxation and stress relief</div>
<div class="t" style="left:30.10px;top:436.66px;font-size:8.85px;color:#1f1f1f;letter-spacing:-0.027px;-webkit-text-stroke:0.14px #1f1f1f;">Enjoy creating a cozy and inviting</div>
<div class="t" style="left:30.10px;top:447.61px;font-size:8.85px;color:#1f1f1f;letter-spacing:0.053px;-webkit-text-stroke:0.14px #1f1f1f;">atmosphere at home</div>
<div class="t" style="left:30.10px;top:458.56px;font-size:8.85px;color:#1f1f1f;letter-spacing:0.034px;-webkit-text-stroke:0.14px #1f1f1f;">Open to experimenting with scents to</div>
<div class="t" style="left:30.10px;top:469.51px;font-size:8.85px;color:#1f1f1f;letter-spacing:-0.038px;-webkit-text-stroke:0.14px #1f1f1f;">enhance their living spaces</div>
<div class="t" style="left:263.50px;transform:translateX(-50%);top:469.97px;font-size:8.9px;color:#4f5f57;-webkit-text-stroke:0.12px #4f5f57;">Attitudes</div>
<div class="t" style="left:30.10px;top:480.96px;font-size:8.85px;color:#1f1f1f;letter-spacing:0.021px;-webkit-text-stroke:0.14px #1f1f1f;">Home decor and interior design</div>
<div class="t" style="left:30.10px;top:491.91px;font-size:8.85px;color:#1f1f1f;letter-spacing:-0.083px;-webkit-text-stroke:0.14px #1f1f1f;">Self-care and well-being</div>
<div class="t" style="left:30.10px;top:502.86px;font-size:8.85px;color:#1f1f1f;letter-spacing:-0.067px;-webkit-text-stroke:0.14px #1f1f1f;">Crafting and DIY projects</div>
<div class="t" style="left:30.10px;top:513.81px;font-size:8.85px;color:#1f1f1f;letter-spacing:-0.024px;-webkit-text-stroke:0.14px #1f1f1f;">Seasonal celebrations and holidays</div>
<div class="t" style="left:263.50px;transform:translateX(-50%);top:514.27px;font-size:8.9px;color:#4f5f57;-webkit-text-stroke:0.12px #4f5f57;">Interests</div>
<div class="t" style="left:30.10px;top:524.86px;font-size:8.85px;color:#1f1f1f;letter-spacing:0.006px;-webkit-text-stroke:0.14px #1f1f1f;">Cooking and entertaining guests.</div>
<div class="t" style="left:30.10px;top:535.81px;font-size:8.85px;color:#1f1f1f;letter-spacing:-0.111px;-webkit-text-stroke:0.14px #1f1f1f;">Gardening.</div>
<div class="t" style="left:30.10px;top:546.76px;font-size:8.85px;color:#1f1f1f;letter-spacing:-0.035px;-webkit-text-stroke:0.14px #1f1f1f;">Reading and cozy nights in.</div>
<div class="t" style="left:30.10px;top:557.71px;font-size:8.85px;color:#1f1f1f;letter-spacing:0.053px;-webkit-text-stroke:0.14px #1f1f1f;">Arts and crafts.</div>
<div class="t" style="left:263.50px;transform:translateX(-50%);top:558.17px;font-size:8.9px;color:#4f5f57;-webkit-text-stroke:0.12px #4f5f57;">Hobbies</div>
<div class="t" style="left:30.10px;top:569.71px;font-size:8.85px;color:#1f1f1f;-webkit-text-stroke:0.14px #1f1f1f;">Appreciate a balanced life with an emphasis</div>
<div class="t" style="left:30.10px;top:580.61px;font-size:8.85px;color:#1f1f1f;-webkit-text-stroke:0.14px #1f1f1f;">on comfort and relaxation.</div>
<div class="a" style="left:909.7px;top:289.7px;width:61.8px;height:23.1px;background:transparent;border:1.5px solid #4170b8;"></div>
<svg style="left:968.9px;top:309.6px;" width="6" height="6" viewBox="0 0 6 6"><circle cx="3" cy="3" r="2.6" fill="#1d55c8" stroke="#fff" stroke-width="0.4"/></svg>
<div class="a" style="left:983px;top:143.9px;width:7px;height:443.1px;background:#f8f9fa;"></div>
<div class="a" style="left:983px;top:156.6px;width:7px;height:0.9px;background:#dadce0;"></div>
<div class="a" style="left:983px;top:143px;width:7px;height:0.9px;background:#e3e3e3;"></div>
<div class="a" style="left:984px;top:210.6px;width:5px;height:15.7px;background:#dadce0;border-radius:2.5px;"></div>
<div class="a" style="left:990px;top:95px;width:34px;height:492px;background:#f9fbfd;"></div>
<svg style="left:1001.3px;top:105.3px;" width="11.2" height="11" viewBox="0 0 11.2 11"><rect x="0" y="0" width="11.2" height="11" rx="1.2" fill="#4285f4"/><rect x="2.2" y="2.2" width="6.8" height="6.6" fill="#ffffff"/><path d="M8.9 0H11.2V2.2H8.9Z" fill="#1967d2"/><rect x="0" y="8.8" width="2.2" height="2.2" fill="#188038"/><rect x="8.9" y="2.2" width="2.3" height="6.6" fill="#fbbc04"/><rect x="2.2" y="8.8" width="6.8" height="2.2" fill="#34a853"/><path d="M8.9 8.8H11.2L8.9 11Z" fill="#ea4335"/><text x="5.6" y="7.6" font-size="4.5" text-anchor="middle" fill="#4285f4" font-family="Liberation Sans">31</text></svg>
<svg style="left:1001.2px;top:139px;" width="11.6" height="11.5" viewBox="0 0 11.6 11.5"><rect x="0" y="0" width="11.6" height="11.5" rx="1.2" fill="#fbbc04"/><circle cx="5.8" cy="4.8" r="2.2" fill="#ffffff"/><rect x="4.8" y="6.8" width="2" height="1.8" fill="#ffffff"/></svg>
<svg style="left:1001.5px;top:173.5px;" width="11" height="11" viewBox="0 0 11 11"><circle cx="5.2" cy="5.8" r="4.3" fill="none" stroke="#1a73e8" stroke-width="1.7"/><path d="M3.2 5.6L5 7.3L10 1.8" fill="none" stroke="#1a73e8" stroke-width="1.6"/></svg>
<svg style="left:1002px;top:207px;" width="10" height="11" viewBox="0 0 10 11"><circle cx="5" cy="2.6" r="2.4" fill="#1a73e8"/><path d="M0.4 10.6V8.6Q0.4 5.9 5 5.9Q9.6 5.9 9.6 8.6V10.6Z" fill="#1a73e8"/></svg>
<svg style="left:1002.5px;top:239.8px;" width="9" height="12" viewBox="0 0 9 12"><path d="M4.5 11.5Q0.3 6.5 0.3 4.3A4.2 4.2 0 0 1 8.7 4.3Q8.7 6.5 4.5 11.5Z" fill="#34a853"/><path d="M0.3 4.3A4.2 4.2 0 0 1 4.5 0.1L4.5 4.3Z" fill="#ea4335"/><path d="M4.5 0.1A4.2 4.2 0 0 1 8.7 4.3H4.5Z" fill="#4285f4"/><path d="M8.7 4.3Q8.7 6.5 4.5 11.5V4.3Z" fill="#fbbc04"/><circle cx="4.5" cy="4.3" r="1.5" fill="#ffffff"/></svg>
<div class="a" style="left:998px;top:272.5px;width:18px;height:0.8px;background:#eef0f2;"></div>
<svg style="left:1001px;top:294px;" width="12" height="12" viewBox="0 0 12 12"><defs><linearGradient id="cg" x1="0" y1="1" x2="1" y2="0"><stop offset="0" stop-color="#2ec0c9"/><stop offset="0.5" stop-color="#3b6ee6"/><stop offset="1" stop-color="#7d2ae8"/></linearGradient></defs><circle cx="6" cy="6" r="6" fill="url(#cg)"/><text x="6.2" y="9" font-size="8.5" text-anchor="middle" fill="#fff" font-style="italic" font-family="Liberation Serif">C</text></svg>
<svg style="left:1002.5px;top:329.5px;" width="9" height="9" viewBox="0 0 9 9"><path d="M4.5 0V9M0 4.5H9" stroke="#1f1f1f" stroke-width="1.2"/></svg>
<div class="a" style="left:0px;top:587px;width:1024px;height:23px;background:#19191b;"></div>
<div class="a" style="left:0px;top:587px;width:1024px;height:1.5px;background:#0f0f11;"></div>
<div class="a" style="left:0px;top:610px;width:1024px;height:29px;background:#000000;"></div>
<div class="a" style="left:48.699999999999996px;top:589.1px;width:19.2px;height:19.2px;background:#252528;border-radius:50%;"></div>
<div class="t" style="left:71.60px;top:593.64px;font-size:7.4px;color:#8e8e91;-webkit-text-stroke:0.2px #8e8e91;">F1</div>
<div class="a" style="left:177.9px;top:589.1px;width:19.2px;height:19.2px;background:#252528;border-radius:50%;"></div>
<div class="t" style="left:200.80px;top:593.64px;font-size:7.4px;color:#8e8e91;-webkit-text-stroke:0.2px #8e8e91;">F2</div>
<div class="a" style="left:306.7px;top:589.1px;width:19.2px;height:19.2px;background:#252528;border-radius:50%;"></div>
<div class="t" style="left:329.60px;top:593.64px;font-size:7.4px;color:#8e8e91;-webkit-text-stroke:0.2px #8e8e91;">F3</div>
<div class="a" style="left:434.79999999999995px;top:589.1px;width:19.2px;height:19.2px;background:#252528;border-radius:50%;"></div>
<div class="t" style="left:457.70px;top:593.64px;font-size:7.4px;color:#8e8e91;-webkit-text-stroke:0.2px #8e8e91;">F4</div>
<div class="a" style="left:563.1999999999999px;top:589.1px;width:19.2px;height:19.2px;background:#252528;border-radius:50%;"></div>
<div class="t" style="left:586.10px;top:593.64px;font-size:7.4px;color:#8e8e91;-webkit-text-stroke:0.2px #8e8e91;">F5</div>
<div class="a" style="left:692.3px;top:589.1px;width:19.2px;height:19.2px;background:#252528;border-radius:50%;"></div>
<div class="t" style="left:715.20px;top:593.64px;font-size:7.4px;color:#8e8e91;-webkit-text-stroke:0.2px #8e8e91;">F6</div>
<div class="a" style="left:821.0px;top:589.1px;width:19.2px;height:19.2px;background:#252528;border-radius:50%;"></div>
<div class="t" style="left:843.90px;top:593.64px;font-size:7.4px;color:#8e8e91;-webkit-text-stroke:0.2px #8e8e91;">F7</div>
<svg style="left:53.5px;top:593.5px;" width="11" height="11" viewBox="0 0 11 11"><path d="M5 1.6C5.3 4.3 6.3 5.4 9 5.7C6.3 6 5.3 7.1 5 9.8C4.7 7.1 3.7 6 1 5.7C3.7 5.4 4.7 4.3 5 1.6Z" fill="#f0f0f0"/><circle cx="3.3" cy="1.4" r="0.9" fill="#e0e0e0"/><path d="M9 7.6C9.1 8.5 9.4 8.8 10.3 8.9C9.4 9 9.1 9.3 9 10.2C8.9 9.3 8.6 9 7.7 8.9C8.6 8.8 8.9 8.5 9 7.6Z" fill="#e0e0e0"/></svg>
<svg style="left:182.5px;top:593.6px;" width="10" height="10" viewBox="0 0 10 10"><circle cx="5" cy="5" r="4.3" fill="none" stroke="#d8d8d8" stroke-width="1"/><circle cx="3.5" cy="4" r="0.6" fill="#d8d8d8"/><circle cx="6.5" cy="4" r="0.6" fill="#d8d8d8"/><path d="M3 6Q5 8 7 6" fill="none" stroke="#d8d8d8" stroke-width="0.9"/></svg>
<svg style="left:311.3px;top:593.6px;" width="10" height="10" viewBox="0 0 10 10"><rect x="3.2" y="0.6" width="6.2" height="6.2" rx="1" fill="none" stroke="#d8d8d8" stroke-width="1"/><rect x="0.6" y="3.2" width="6.2" height="6.2" rx="1" fill="#2c2c2e" stroke="#d8d8d8" stroke-width="1"/><path d="M2.2 8L3.7 4.8L5.2 8" fill="none" stroke="#d8d8d8" stroke-width="0.7"/></svg>
<svg style="left:440px;top:593.5px;" width="9" height="11" viewBox="0 0 9 11"><rect x="0.6" y="1.2" width="7.8" height="9.2" rx="1.4" fill="none" stroke="#d8d8d8" stroke-width="1"/><rect x="2.6" y="0.3" width="3.8" height="2" rx="0.5" fill="#d8d8d8"/></svg>
<svg style="left:567.5px;top:594px;" width="11" height="9" viewBox="0 0 11 9"><rect x="0.6" y="0.6" width="9.8" height="7" rx="1" fill="none" stroke="#4a4a4c" stroke-width="1"/><path d="M3 8.4H8" stroke="#4a4a4c" stroke-width="1"/></svg>
<svg style="left:696.5px;top:593.5px;" width="11" height="10" viewBox="0 0 11 10"><path d="M0.6 1.2H6.6M3.6 1.2V8.5" stroke="#d8d8d8" stroke-width="1.1"/><path d="M5.3 8.6L9.5 3.5L10.4 4.3L6.2 9.4L5 9.8Z" fill="none" stroke="#d8d8d8" stroke-width="0.8"/></svg>
<svg style="left:825.5px;top:593.5px;" width="10" height="10" viewBox="0 0 10 10"><circle cx="5" cy="5" r="1.6" fill="none" stroke="#d8d8d8" stroke-width="0.9"/><path d="M5 0.6L6.1 1.8L7.8 1.6L8.1 3.3L9.4 4.4L8.6 5.9L8.9 7.6L7.2 8L6.2 9.4L5 8.5L3.8 9.4L2.8 8L1.1 7.6L1.4 5.9L0.6 4.4L1.9 3.3L2.2 1.6L3.9 1.8Z" fill="none" stroke="#d8d8d8" stroke-width="0.9" stroke-linejoin="round"/></svg>
<svg style="left:836.4px;top:589px;" width="4" height="4" viewBox="0 0 4 4"><circle cx="2" cy="2" r="1.9" fill="#e8704a"/></svg>
<svg style="left:957.5px;top:597px;" width="10" height="3" viewBox="0 0 10 3"><circle cx="1.3" cy="1.3" r="1" fill="#e0e0e0"/><circle cx="5" cy="1.3" r="1" fill="#e0e0e0"/><circle cx="8.7" cy="1.3" r="1" fill="#e0e0e0"/></svg>
<svg style="left:14px;top:618.5px;" width="9" height="12" viewBox="0 0 9 12"><rect x="2.5" y="0.6" width="4" height="6.8" rx="2" fill="none" stroke="#d8d8d8" stroke-width="1"/><path d="M0.8 5.2A3.7 3.7 0 0 0 8.2 5.2M0.8 10.9H8.2" fill="none" stroke="#d8d8d8" stroke-width="1"/></svg>
<svg style="left:882.5px;top:619.5px;" width="10" height="10" viewBox="0 0 10 10"><path d="M1 0.5V9.5M5 0.5V9.5M9 0.5V9.5" stroke="#d8d8d8" stroke-width="1.1"/></svg>
<svg style="left:927.8px;top:619.5px;" width="10.5" height="10.5" viewBox="0 0 10.5 10.5"><rect x="0.6" y="0.6" width="9.3" height="9.3" rx="3.2" fill="none" stroke="#d8d8d8" stroke-width="1.2"/></svg>
<svg style="left:972.5px;top:621.5px;" width="12" height="7" viewBox="0 0 12 7"><path d="M0.6 0.6L6 6L11.4 0.6" fill="none" stroke="#d8d8d8" stroke-width="1.2"/></svg>
</body></html>
